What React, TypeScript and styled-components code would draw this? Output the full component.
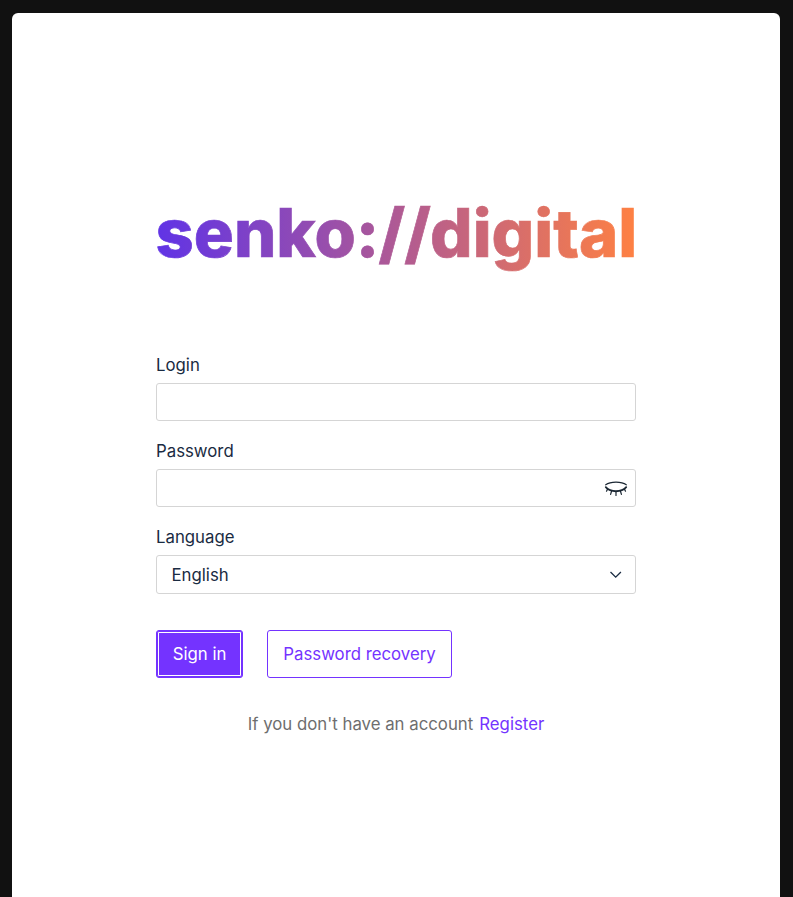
import React from 'react';
import styled, { createGlobalStyle } from 'styled-components';

const GlobalStyle = createGlobalStyle`
  * { box-sizing: border-box; }
  html, body { margin: 0; background: #111; }
  body { font-family: Inter, sans-serif; font-size: 16.8px; line-height: 24px; color: #1a2b42; overflow: hidden; }
`;

const Page = styled.div`
  height: 897px;
  padding: 13px 13px 0 12px;
  background: #111;
`;

const Card = styled.main`
  height: 100%;
  padding: 190px 144px 0;
  background: #fff;
  border-radius: 6px 6px 0 0;
`;

const Logo = styled.h1`
  width: 482px;
  height: 80px;
  margin: 0 0 70px -0.5px;
  font-size: 66.8px;
  font-weight: 800;
  line-height: 60px;
  white-space: nowrap;
  color: transparent;
  -webkit-text-stroke: 0.7px transparent;
  background: linear-gradient(90deg, #6033e6, #ff8142);
  -webkit-background-clip: text;
  background-clip: text;
`;

const Separator = styled.span`
  letter-spacing: -0.9px;
`;

const Field = styled.div`
  display: flex;
  flex-direction: column;
  gap: 6px;
  margin-bottom: 18px;
`;

const Label = styled.label`
  height: 24px;
`;

const Control = styled.div<{ $tall?: boolean }>`
  display: flex;
  align-items: center;
  height: ${({ $tall }) => ($tall ? 39 : 38)}px;
  padding: 0 7px 0 14.5px;
  border: 1px solid #d5d5d5;
  border-radius: 3px;
`;

const Input = styled.input`
  flex: 1;
  min-width: 0;
  border: 0;
  outline: 0;
  background: transparent;
  font: inherit;
`;

const Value = styled.span`
  flex: 1;
`;

const Actions = styled.div`
  display: flex;
  gap: 24px;
  margin-top: 36px;
`;

const Button = styled.button<{ $primary?: boolean }>`
  width: ${({ $primary }) => ($primary ? 87 : 185)}px;
  height: 48px;
  padding: 0;
  font: inherit;
  border: 1px solid #7433ff;
  border-radius: 3px;
  color: ${({ $primary }) => ($primary ? '#fff' : '#7433ff')};
  background: ${({ $primary }) => ($primary ? '#7433ff' : '#fff')};
  box-shadow: ${({ $primary }) => ($primary ? 'inset 0 0 0 1px #7433ff, inset 0 0 0 2px #fff' : 'none')};
`;

const Footer = styled.p`
  margin: 34px 0 0;
  text-align: center;
  color: #6e6e6e;
`;

const Link = styled.a`
  color: #7433ff;
  margin-left: 6px;
`;

export default function App() {
  return (
    <Page>
      <GlobalStyle />
      <Card>
        <Logo>senko<Separator>://</Separator>digital</Logo>
        <Field>
          <Label>Login</Label>
          <Control><Input aria-label="Login" /></Control>
        </Field>
        <Field>
          <Label>Password</Label>
          <Control>
            <Input type="password" aria-label="Password" />
            <svg width="24" height="24" viewBox="0 0 24 24" fill="none" stroke="#1b2733" strokeLinecap="round">
              <path d="M1.7 8.8C6.5 5.2 17.5 5.2 22.3 8.8" strokeWidth="1.1" />
              <path d="M1.8 11.2C6.5 16.6 17.5 16.6 22.2 11.2" strokeWidth="1.8" />
              <path d="M3.7 12.9l-1.2 2.3M7.6 15l-1 3.4M12 15.5v4M16.4 15l1 3.4M20.3 12.9l1.2 2.3" strokeWidth="1.2" />
            </svg>
          </Control>
        </Field>
        <Field>
          <Label>Language</Label>
          <Control $tall>
            <Value>English</Value>
            <svg width="24" height="24" viewBox="0 0 24 24" fill="none" stroke="#1a2b42" strokeWidth="1.3">
              <path d="M6.5 9l5.2 5.2L16.9 9" />
            </svg>
          </Control>
        </Field>
        <Actions>
          <Button $primary>Sign in</Button>
          <Button>Password recovery</Button>
        </Actions>
        <Footer>If you don't have an account<Link>Register</Link></Footer>
      </Card>
    </Page>
  );
}
